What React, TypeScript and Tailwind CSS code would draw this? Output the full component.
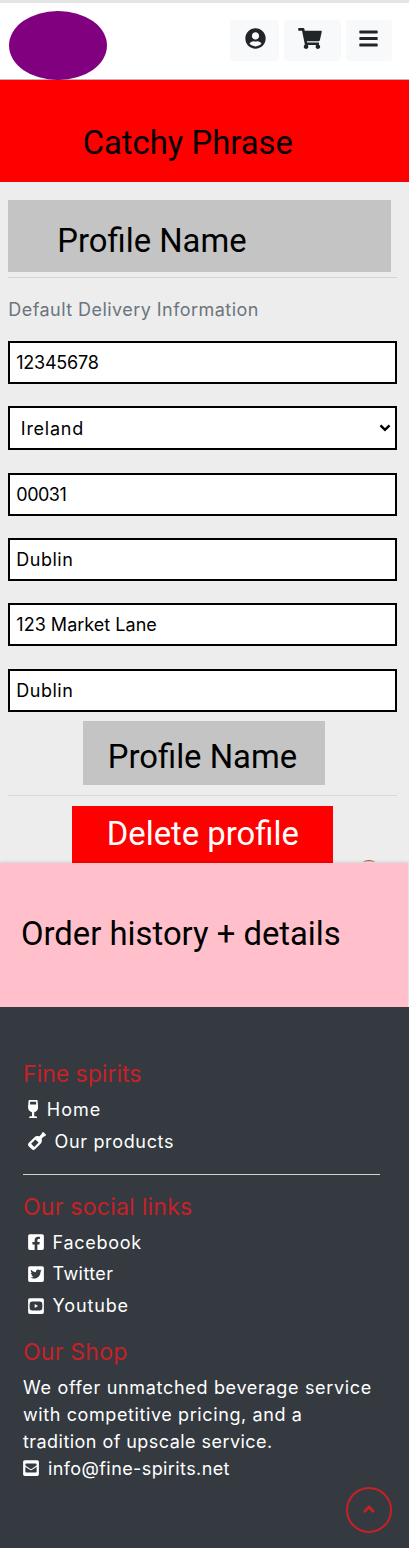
import type { ReactNode } from 'react';
import {
  FaAngleUp,
  FaBars,
  FaEnvelopeSquare,
  FaFacebookSquare,
  FaShoppingCart,
  FaTwitterSquare,
  FaUserCircle,
  FaWineBottle,
  FaWineGlassAlt,
  FaYoutubeSquare,
} from 'react-icons/fa';

function Field({ children, className }: { children: ReactNode; className: string }) {
  return (
    <div className={`flex w-[389px] items-center justify-between border-[2.4px] border-black bg-white text-black ${className}`}>
      {children}
    </div>
  );
}

function FooterLink({ icon, label, className }: { icon: ReactNode; label: string; className: string }) {
  return (
    <a className={`flex h-[31.7px] items-center gap-[9px] pl-[4.6px] whitespace-nowrap ${className}`}>
      {icon}
      <span>{label}</span>
    </a>
  );
}

export default function App() {
  return (
    <div className="flex h-[1548px] w-[409px] flex-col overflow-hidden bg-[#ededed] font-['Inter',sans-serif] text-[18px] leading-[27px]">
      <header className="flex h-[80px] shrink-0 items-start justify-between border-t-[3px] border-b border-t-[#e5e5e5] border-b-[#c4b5b5] bg-white pr-[17px] pl-[8.5px]">
        <div className="z-10 mt-[7.5px] h-[69.7px] w-[98px] rounded-[50%] bg-[#800080]" />
        <nav className="mt-[17px] flex gap-[5px] text-[#212529]">
          <button className="flex h-[41px] w-[48.5px] justify-center rounded-[4px] bg-[#f8f9fa] pt-2 pl-[2px]">
            <FaUserCircle size={21} />
          </button>
          <button className="flex h-[41px] w-[57px] justify-center rounded-[4px] bg-[#f8f9fa] pt-2 pr-[4px]">
            <FaShoppingCart className="h-[21px] w-[24px]" />
          </button>
          <button className="flex h-[41px] w-[46.5px] justify-center rounded-[4px] bg-[#f8f9fa] pt-2">
            <FaBars size={21} />
          </button>
        </nav>
      </header>

      <section className="flex h-[102.3px] w-[408.5px] shrink-0 items-center bg-[#ff0000] pt-[23px] pl-[82.7px]">
        <h1 className="font-['Roboto',sans-serif] text-[32.8px] leading-[40px] whitespace-nowrap text-black">Catchy Phrase</h1>
      </section>

      <main className="flex h-[680.7px] shrink-0 flex-col pl-[8.3px]">
        <div className="mt-[18px] flex h-[72px] w-[382.5px] shrink-0 items-center bg-[#c4c4c4] pt-[10px] pl-[49px]">
          <h2 className="font-['Roboto',sans-serif] text-[32.8px] leading-[40px] whitespace-nowrap text-black">Profile Name</h2>
        </div>
        <div className="mt-[4.7px] h-px w-[389px] shrink-0 bg-[#d4d4d4]" />
        <p className="mt-[17.6px] h-[27px] shrink-0 tracking-[0.45px] whitespace-nowrap text-[#6c757d]">Default Delivery Information</p>

        <div className="mt-[18.6px] flex shrink-0 flex-col gap-[22.3px]">
          <Field className="h-[43px] pl-[6px] tracking-[-0.25px]">12345678</Field>
          <Field className="h-[44px] pr-[4px] pl-[10.5px] tracking-[0.75px]">
            <span>Ireland</span>
            <svg viewBox="0 0 12 8" className="h-[8px] w-[12px]" fill="none" stroke="black" strokeWidth="2.4">
              <path d="M1.5 1.3 6 5.8l4.5-4.5" />
            </svg>
          </Field>
          <Field className="h-[43px] pl-[6px] tracking-[-0.5px]">00031</Field>
          <Field className="h-[43px] pl-[6px] tracking-[0.5px]">Dublin</Field>
          <Field className="h-[43px] pl-[6px] tracking-[0.02px]">123 Market Lane</Field>
          <Field className="h-[43px] pl-[6px] tracking-[0.5px]">Dublin</Field>
        </div>

        <div className="mt-[9.5px] ml-[74.7px] flex h-[63.7px] w-[242px] shrink-0 items-center bg-[#c4c4c4] pt-[8px] pl-[24.8px]">
          <span className="font-['Roboto',sans-serif] text-[32.8px] leading-[40px] whitespace-nowrap text-black">Profile Name</span>
        </div>
        <div className="mt-[10px] h-px w-[389px] shrink-0 bg-[#d8d8d8]" />
        <div className="flex items-end gap-[26px]">
          <button className="mt-[10px] ml-[64.2px] flex h-[57.8px] w-[260.5px] shrink-0 items-center bg-[#ff0000] pb-[1.6px] pl-[34.3px]">
            <span className="font-['Roboto',sans-serif] text-[32.8px] leading-[40px] whitespace-nowrap text-white">Delete profile</span>
          </button>
          <svg viewBox="0 0 20 5" className="h-[5px] w-[20px]" fill="#c84a4a">
            <path d="M3.5 2.8Q10-1 16.5 2.8Q10 1.8 3.5 2.8Z" />
          </svg>
        </div>
      </main>

      <section className="flex h-[144px] w-[408.3px] shrink-0 items-center bg-[#ffc0cb] pb-[2px] pl-[21px] shadow-[0_-1px_3px_rgba(0,0,0,0.12)]">
        <h2 className="font-['Roboto',sans-serif] text-[32.8px] leading-[40px] whitespace-nowrap text-black">Order history + details</h2>
      </section>

      <footer className="flex flex-1 flex-col bg-[#343a40] px-[23px] pt-[53px] text-white">
        <h3 className="h-[28px] text-[23px] leading-[28px] text-[#c72127]">Fine spirits</h3>
        <div className="mt-[5.5px]">
          <FooterLink className="tracking-[1px]" icon={<FaWineGlassAlt className="h-[18px] w-[10.2px]" />} label="Home" />
          <FooterLink className="tracking-[0.65px]" icon={<FaWineBottle size={18} />} label="Our products" />
        </div>
        <div className="mt-[16.7px] h-[1.2px] w-[357px] bg-[#d3d4d5]" />
        <h3 className="mt-[18px] h-[28px] text-[23px] leading-[28px] tracking-[0.25px] text-[#c72127]">Our social links</h3>
        <div className="mt-[5.6px]">
          <FooterLink className="tracking-[0.7px]" icon={<FaFacebookSquare className="h-[18px] w-[16px]" />} label="Facebook" />
          <FooterLink className="tracking-[0.4px]" icon={<FaTwitterSquare className="h-[18px] w-[16px]" />} label="Twitter" />
          <FooterLink className="tracking-[0.85px]" icon={<FaYoutubeSquare className="h-[18px] w-[16px]" />} label="Youtube" />
        </div>
        <h3 className="mt-[16.8px] h-[28px] text-[23px] leading-[28px] tracking-[0.25px] text-[#c72127]">Our Shop</h3>
        <div className="mt-[7.8px] whitespace-nowrap">
          <p className="tracking-[0.68px]">We offer unmatched beverage service</p>
          <p className="tracking-[0.6px]">with competitive pricing, and a</p>
          <p className="tracking-[0.45px]">tradition of upscale service.</p>
          <p className="flex items-center gap-[9px] tracking-[0.4px]">
            <FaEnvelopeSquare className="h-[18px] w-[16px]" />
            <span>info@fine-spirits.net</span>
          </p>
        </div>
        <button className="mt-[5px] mr-[-5.5px] flex size-[46px] shrink-0 items-center justify-center self-end rounded-full border-2 border-[#c72127] pb-[2px] text-[#c72127]">
          <FaAngleUp size={18} />
        </button>
      </footer>
    </div>
  );
}
